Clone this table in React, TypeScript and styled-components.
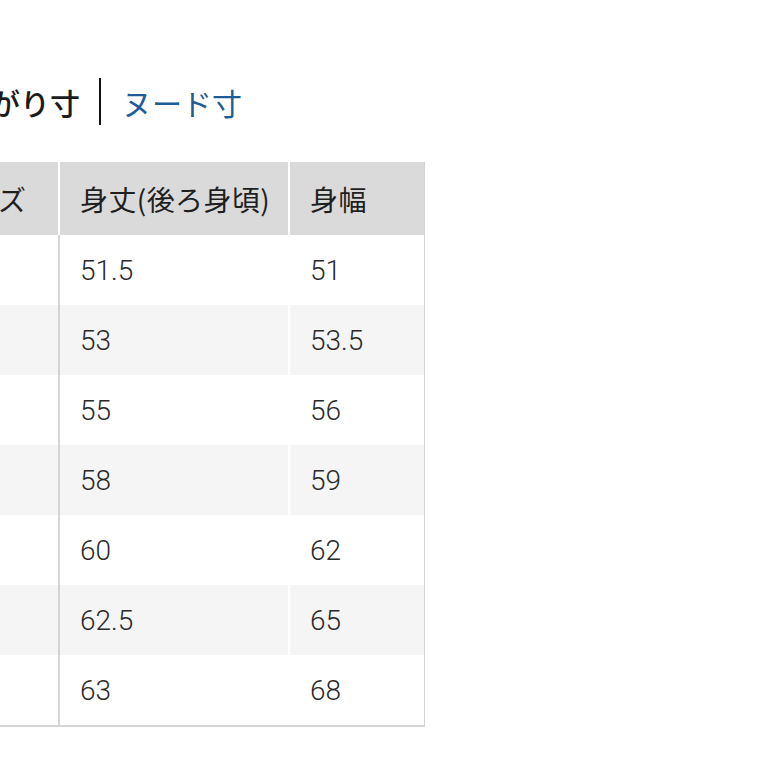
import React from "react";
import styled, { createGlobalStyle } from "styled-components";

const Global = createGlobalStyle`
  *, *::before, *::after { box-sizing: border-box; }
  html, body { margin: 0; padding: 0; background: #ffffff; overflow: hidden; }
  body { font-family: Roboto, "Noto Sans CJK JP", sans-serif; color: #222; }
`;

const Page = styled.div`
  width: 767px;
  height: 767px;
  padding-top: 78px;
  overflow: hidden;
`;

const Shifted = styled.div`
  margin-left: -70px;
  display: flex;
  flex-direction: column;
  gap: 37px;
`;

const Tabs = styled.div`
  display: flex;
  align-items: center;
  height: 47px;
  font-family: "Noto Sans CJK JP", sans-serif;
  font-size: 30px;
`;

const Tab = styled.span<{ $active?: boolean }>`
  color: ${(p) => (p.$active ? "#1b1b1b" : "#1d5c96")};
  font-weight: ${(p) => (p.$active ? 500 : 400)};
  line-height: 1;
`;

const Divider = styled.span`
  width: 2px;
  height: 47px;
  background: #111;
  margin: 0 21px 0 19px;
`;

const Table = styled.table`
  border-collapse: separate;
  border-spacing: 0;
  table-layout: fixed;
  width: 495px;
  border-right: 1px solid #d2d2d2;
  border-bottom: 2px solid #d6d6d6;
`;

const Th = styled.th<{ $w: number; $first?: boolean }>`
  width: ${(p) => p.$w}px;
  height: 73px;
  background: #dadada;
  border-left: ${(p) => (p.$first ? "none" : "2px solid #ffffff")};
  padding: 0 0 0 ${(p) => (p.$first ? 12 : 20)}px;
  text-align: left;
  font-family: "Noto Sans CJK JP", sans-serif;
  font-weight: 400;
  font-size: 28px;
  letter-spacing: 0.4px;
  color: #1f1f1f;
  white-space: nowrap;
`;

const Tr = styled.tr<{ $alt: boolean }>`
  background: ${(p) => (p.$alt ? "#f5f5f5" : "#ffffff")};
`;

const Td = styled.td<{ $edge: "none" | "line" | "gap" }>`
  height: 70px;
  padding: 0 0 0 20px;
  border-left: ${(p) =>
    p.$edge === "none" ? "none" : p.$edge === "line" ? "2px solid #d4d4d4" : "2px solid #ffffff"};
  font-family: Roboto, sans-serif;
  font-weight: 300;
  font-size: 28px;
  color: #2a2a2a;
  white-space: nowrap;
`;

const rows: [string, string, string][] = [
  ["XS", "51.5", "51"],
  ["S", "53", "53.5"],
  ["M", "55", "56"],
  ["L", "58", "59"],
  ["XL", "60", "62"],
  ["XXL", "62.5", "65"],
  ["3XL", "63", "68"],
];

export default function App() {
  return (
    <Page>
      <Global />
      <Shifted>
        <Tabs>
          <Tab $active>仕上がり寸</Tab>
          <Divider />
          <Tab>ヌード寸</Tab>
        </Tabs>
        <Table>
          <thead>
            <tr>
              <Th $w={128} $first>
                サイズ
              </Th>
              <Th $w={230}>身丈(後ろ身頃)</Th>
              <Th $w={136}>身幅</Th>
            </tr>
          </thead>
          <tbody>
            {rows.map((r, i) => (
              <Tr key={r[0]} $alt={i % 2 === 1}>
                <Td $edge="none">{r[0]}</Td>
                <Td $edge="line">{r[1]}</Td>
                <Td $edge="gap">{r[2]}</Td>
              </Tr>
            ))}
          </tbody>
        </Table>
      </Shifted>
    </Page>
  );
}
